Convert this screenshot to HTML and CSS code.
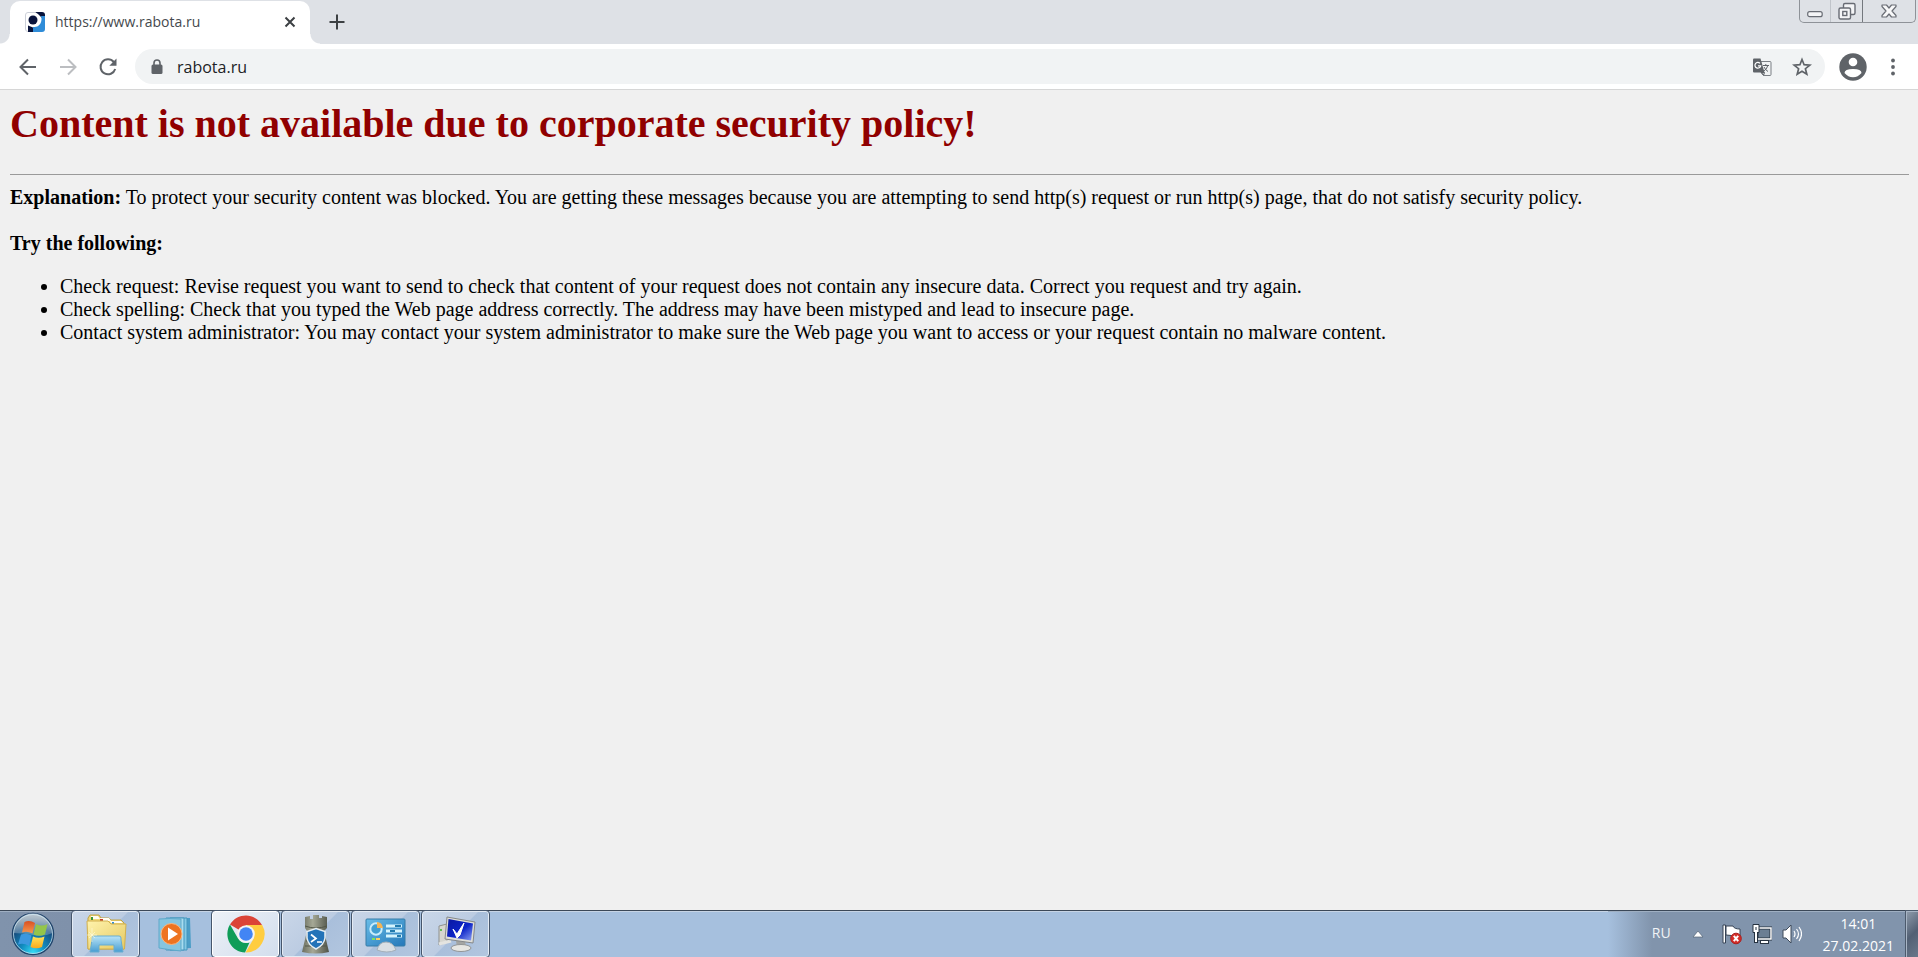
FILE: index.html
```html
<!DOCTYPE html>
<html lang="en">
<head>
<meta charset="utf-8">
<title>https://www.rabota.ru</title>
<link rel="stylesheet" href="styles.css">
</head>
<body>
<div class="desktop">
  <header class="browser">
    <div class="tabstrip">
      <div class="tab">
        <svg class="favicon" width="20" height="20" viewBox="0 0 20 20" aria-hidden="true">
          <defs><clipPath id="fav"><rect width="20" height="20" rx="3"/></clipPath></defs>
          <g clip-path="url(#fav)">
            <rect width="20" height="20" fill="#fff"/>
            <path d="M10 0h10v5l-3 1-4-4z" fill="#08133c"/>
            <path d="M20 4v16H8v-5c6 1 10-5 8-11z" fill="#2f8cd8"/>
            <path d="M3 13.500l5 2V20H3z" fill="#08133c"/>
            <circle cx="8" cy="8" r="4.500" fill="#08133c"/>
          </g>
          <path d="M10 .500H3Q.500.500.500 3v14Q.500 19.500 3 19.500" fill="none" stroke="#ccd0d8"/>
        </svg>
        <span class="tab-title">https://www.rabota.ru</span>
        <button class="tab-close" type="button" aria-label="Close tab">
          <svg width="12" height="12" viewBox="0 0 12 12"><path d="M1.500 1.500l9 9m0-9l-9 9" stroke="#3c4043" stroke-width="2"/></svg>
        </button>
      </div>
      <button class="new-tab" type="button" aria-label="New tab">
        <svg width="16" height="16" viewBox="0 0 16 16"><path d="M8 .500v15M.500 8h15" stroke="#3c4043" stroke-width="2"/></svg>
      </button>
      <div class="window-controls">
        <button class="win-btn" type="button" aria-label="Minimize">
          <svg width="16" height="20" viewBox="0 0 16 20"><rect x=".700" y="11.700" width="14.500" height="5" rx="2" fill="#f4f5f7" stroke="#686c74" stroke-width="1.200"/></svg>
        </button>
        <button class="win-btn" type="button" aria-label="Restore">
          <svg width="18" height="20" viewBox="0 0 18 20" fill="#f4f5f7" stroke="#686c74" stroke-width="1.400"><rect x="5.500" y="3.500" width="11.500" height="11" rx="1.500"/><rect x="1" y="8" width="11.500" height="11" rx="1.500"/><rect x="4.800" y="11.500" width="4" height="4"/></svg>
        </button>
        <button class="win-btn win-close" type="button" aria-label="Close">
          <svg width="16" height="20" viewBox="0 0 16 20"><path d="M1 5h4.500L8 8l2.500-3H15v1.500L11 11l4 4.500V17h-4.500L8 14l-2.500 3H1v-1.500L5 11 1 6.500z" fill="#f8f8f9" stroke="#686c74" stroke-width="1.200" stroke-linejoin="round"/></svg>
        </button>
      </div>
    </div>
    <div class="toolbar">
      <button class="nav-btn" type="button" aria-label="Back">
        <svg width="20" height="20" viewBox="0 0 20 20" fill="none" stroke="#5f6368" stroke-width="2"><path d="M18 10H3M10 2.500L2.500 10l7.500 7.500"/></svg>
      </button>
      <button class="nav-btn" type="button" aria-label="Forward" disabled>
        <svg width="20" height="20" viewBox="0 0 20 20" fill="none" stroke="#bcbec1" stroke-width="2"><path d="M2 10h15M10 2.500l7.500 7.500-7.500 7.500"/></svg>
      </button>
      <button class="nav-btn" type="button" aria-label="Reload">
        <svg width="20" height="20" viewBox="0 0 20 20"><path d="M15.800 5A7.500 7.500 0 1 0 17.200 12" fill="none" stroke="#5f6368" stroke-width="2"/><path d="M18.500 1.500v7.200h-7.200z" fill="#5f6368"/></svg>
      </button>
      <form class="omnibox">
        <svg width="12" height="16" viewBox="0 0 12 16" aria-hidden="true"><rect x=".500" y="5.500" width="11" height="9.500" rx="1.500" fill="#5f6368"/><path d="M3 6V4a3 3 0 0 1 6 0v2" fill="none" stroke="#5f6368" stroke-width="1.600"/></svg>
        <input class="url" type="text" aria-label="Address" value="rabota.ru">
        <button class="icon-btn" type="button" aria-label="Translate this page">
          <svg width="20" height="20" viewBox="0 0 20 20"><path d="M9 4.500h9q1 0 1 1v12q0 1-1 1h-6L9 14" fill="#f1f3f4" stroke="#7b7f84"/><path d="M2 1.500h6.500l4 14H2q-1 0-1-1v-12q0-1 1-1z" fill="#5f6368"/><path d="M8 6.300a2.900 2.900 0 1 0 .7 2.500H6" fill="none" stroke="#fff" stroke-width="1.200"/><path d="M11 8.500h6M13.800 7v1.500M15.800 8.500q-1 4-4 5.500M12 10q1.500 3 4 4.500M9 15.500h3.500l-1 3z" fill="none" stroke="#5f6368"/></svg>
        </button>
        <button class="icon-btn" type="button" aria-label="Bookmark this page">
          <svg width="20" height="20" viewBox="0 0 20 20"><path d="M10 2.500l2.100 5.200 5.700.400-4.400 3.600 1.400 5.500L10 14.200l-4.800 3 1.400-5.500L2.200 8.100l5.700-.400z" fill="none" stroke="#5f6368" stroke-width="1.700"/></svg>
        </button>
      </form>
      <button class="profile" type="button" aria-label="Profile">
        <svg width="28" height="28" viewBox="0 0 28 28"><circle cx="14" cy="14" r="13.700" fill="#5f6368"/><circle cx="14" cy="9" r="4.300" fill="#fff"/><path d="M5.500 20q0-4 8.500-4t8.500 4q-3.500 4.200-8.500 4.200T5.500 20z" fill="#fff"/></svg>
      </button>
      <button class="menu" type="button" aria-label="Menu">
        <svg width="4" height="18" viewBox="0 0 4 18" fill="#5f6368"><circle cx="2" cy="2.500" r="1.900"/><circle cx="2" cy="9" r="1.900"/><circle cx="2" cy="15.500" r="1.900"/></svg>
      </button>
    </div>
  </header>

  <main class="page">
    <h1 class="headline">Content is not available due to corporate security policy!</h1>
    <hr class="rule">
    <p class="explanation"><b>Explanation:</b> To protect your security content was blocked. You are getting these messages because you are attempting to send http(s) request or run http(s) page, that do not satisfy security policy.</p>
    <p class="try"><b>Try the following:</b></p>
    <ul class="tips">
      <li>Check request: Revise request you want to send to check that content of your request does not contain any insecure data. Correct you request and try again.</li>
      <li>Check spelling: Check that you typed the Web page address correctly. The address may have been mistyped and lead to insecure page.</li>
      <li>Contact system administrator: You may contact your system administrator to make sure the Web page you want to access or your request contain no malware content.</li>
    </ul>
  </main>

  <footer class="taskbar">
    <button class="start" type="button" aria-label="Start">
      <svg width="44" height="44" viewBox="0 0 44 44">
        <defs>
          <radialGradient id="orb" cx=".5" cy=".95" r=".85"><stop offset="0" stop-color="#35dcf5"/><stop offset=".35" stop-color="#118cc0"/><stop offset=".75" stop-color="#174f80"/><stop offset="1" stop-color="#41637f"/></radialGradient>
          <linearGradient id="gloss" x2="0" y2="1"><stop offset="0" stop-color="#fff" stop-opacity=".65"/><stop offset="1" stop-color="#fff" stop-opacity=".2"/></linearGradient>
          <linearGradient id="flagR" x2="0" y2="1"><stop offset="0" stop-color="#d94f20"/><stop offset="1" stop-color="#f79a50"/></linearGradient>
          <linearGradient id="flagY" x2="0" y2="1"><stop offset="0" stop-color="#ffe35a"/><stop offset="1" stop-color="#f7aa1d"/></linearGradient>
        </defs>
        <circle cx="22" cy="22" r="20.500" fill="url(#orb)" stroke="#21456c" stroke-width="1.500"/>
        <path d="M2.500 21a19.500 19.500 0 0 1 39 0q-8 4-19.500 2T2.500 21z" fill="url(#gloss)"/>
        <circle cx="22" cy="22" r="19.500" fill="none" stroke="#d5effa" stroke-opacity=".7"/>
        <path d="M13.500 10q5-2.500 10.500 1l-2.500 10.500q-5.500-3-10.500-1z" fill="url(#flagR)"/>
        <path d="M25 12q5.500 3 11.500 0L34 22.500q-6 2.500-11.500 0z" fill="#94c54a"/>
        <path d="M10 22.500q5.500-2 10.500 1L18 34q-5.500-3.500-11-1.500z" fill="#3c98df"/>
        <path d="M22 24.500q5.500 2.500 11.500 0L31 35q-6 2.500-11.500 0z" fill="url(#flagY)"/>
      </svg>
    </button>
    <nav class="tasks" aria-label="Taskbar">
      <button class="task" type="button" aria-label="Explorer">
        <svg width="44" height="42" viewBox="0 0 44 42">
          <defs>
            <linearGradient id="fold" x2="1" y2="1"><stop offset="0" stop-color="#fff3ac"/><stop offset="1" stop-color="#e5c963"/></linearGradient>
            <linearGradient id="stand" x2="0" y2="1"><stop offset="0" stop-color="#b9e4f7"/><stop offset="1" stop-color="#479dd2"/></linearGradient>
          </defs>
          <path d="M4 36V5l2-3h9l2 3h8l2 2h10l3 3v26z" fill="#f1d979" stroke="#c0a244"/>
          <path d="M7 3h7l2 3H7zM16 5h9l2 3H17zM26 8h11l2 2H27z" fill="#fffdf2"/>
          <path d="M7 4h2v3H7z" fill="#3c963a"/><path d="M16 6h3v2h-3z" fill="#c33d28"/><path d="M28 9h2v2h-2z" fill="#318bd0"/>
          <path d="M3 8h21l3 3h15l-1.500 25H4z" fill="url(#fold)" stroke="#d2b04e"/>
          <path d="M8 27v-2q0-2 2-2h25q2 0 2 2v2l2 12h-9v-7H15v7H6z" fill="url(#stand)" stroke="#68add0"/>
          <path d="M8 15v14M3 22h10M5 19l6 6M11 19l-6 6" stroke="#fffce0" stroke-opacity=".6"/>
        </svg>
      </button>
      <button class="task task-pinned" type="button" aria-label="Media Player">
        <svg width="36" height="38" viewBox="0 0 36 38">
          <path d="M14 3h18l1 30-15 1z" fill="#4b9dc6"/><path d="M12 3h17v32H12z" fill="#85c9e4" stroke="#4496bd"/><path d="M8 3h18v32H8z" fill="#a8dcef" stroke="#4496bd"/>
          <path d="M1 4q11-1 22 0v32q-11-1-22-3z" fill="#86c5df" stroke="#5ea9ca"/>
          <circle cx="13.500" cy="19" r="10.500" fill="#ee7421" stroke="#fbb77e"/>
          <path d="M10 12.500l10 6.500-10 6.500z" fill="#fff"/>
        </svg>
      </button>
      <button class="task task-active" type="button" aria-label="Chrome">
        <svg width="38" height="38" viewBox="0 0 38 38">
          <path d="M19 19L3 9.500A18.500 18.500 0 0 1 35 10H19z" fill="#db4437"/>
          <path d="M19 10h16.200A18.500 18.500 0 0 1 18.500 37.500L27 23z" fill="#ffcd40"/>
          <path d="M3 9.500L11 23.500q4 6 11.500 4L18 37.500A18.500 18.500 0 0 1 3 9.500z" fill="#0f9d58"/>
          <circle cx="19" cy="19" r="8.800" fill="#f4f4f4"/><circle cx="19" cy="19" r="6.800" fill="#4285f4"/>
        </svg>
      </button>
      <button class="task" type="button" aria-label="PowerShell">
        <svg width="28" height="40" viewBox="0 0 28 40">
          <defs><linearGradient id="rook"><stop offset="0" stop-color="#6b6f60"/><stop offset=".4" stop-color="#a5a896"/><stop offset="1" stop-color="#4f5347"/></linearGradient></defs>
          <path d="M3 3l5-1v3h3V1h6v3h3V2l5 1v11l-3 3 5 21q-13 3-27 0l5-21-2-3z" fill="url(#rook)"/>
          <path d="M3 12q11 4 22 0M4 27h5M3 32h8M19 32h6M6 21h4" stroke="#535748" fill="none"/>
          <path d="M14 14.500l9 3V24q-1 7-9 11-8-4-9-11v-6.500z" fill="#2373b8" stroke="#e6eef4" stroke-width="1.500"/>
          <path d="M9 20.500l5 4L9 28M15 28h5" fill="none" stroke="#fff" stroke-width="1.700"/>
        </svg>
      </button>
      <button class="task" type="button" aria-label="Control Panel">
        <svg width="42" height="38" viewBox="0 0 42 38">
          <defs><linearGradient id="pan" x2="1" y2="1"><stop offset="0" stop-color="#69bde8"/><stop offset="1" stop-color="#2578b9"/></linearGradient></defs>
          <rect x="1" y="4" width="39" height="27" rx="1" fill="url(#pan)" stroke="#367ca8"/>
          <circle cx="11" cy="14" r="5.700" fill="#419fd2" stroke="#c8ecfb" stroke-width="2"/><path d="M12 13V7q5 0 6 6z" fill="#f4b455"/>
          <path d="M21 11h16M21 16h16M21 21h16" stroke="#d5f4fd" stroke-width="3"/><path d="M30 11h6M25 16h5M32 21h4" stroke="#237bad" stroke-width="2"/>
          <path d="M7 24h3" stroke="#7ce45e" stroke-width="2"/><path d="M11 24h4" stroke="#ffd05e" stroke-width="2"/>
          <path d="M12 35q2-8 9-8t10 8q-9 4-19 0z" fill="#d9dfe4" stroke="#a4afb8"/>
        </svg>
      </button>
      <button class="task" type="button" aria-label="System">
        <svg width="40" height="38" viewBox="0 0 40 38">
          <defs><linearGradient id="scr" x2="1" y2="1"><stop offset="0" stop-color="#0a18a0"/><stop offset=".55" stop-color="#0c24c8"/><stop offset="1" stop-color="#8ea2f3"/></linearGradient></defs>
          <path d="M3 11l8-2v18l-8 3z" fill="#d6d6d0" stroke="#8e908d"/><circle cx="5" cy="15" r="1" fill="#38b32c"/><path d="M3 29l12-3" stroke="#e4e4e0" stroke-width="3"/>
          <path d="M20 26h9l1 6h-9z" fill="#a3a5a3"/><ellipse cx="25" cy="33" rx="10" ry="3.500" fill="#e6e6e2" stroke="#929596"/>
          <path d="M11 2l28 5-2 21-28-4z" fill="#deded8" stroke="#85888a"/><path d="M12.500 4L37 8.500l-2 17-24-4z" fill="url(#scr)"/>
          <path d="M17 14l4 5 7-11-4 12-3 3z" fill="#fff" stroke="#fff"/>
        </svg>
      </button>
    </nav>
    <div class="tray">
      <button class="lang" type="button">RU</button>
      <button class="tray-btn tray-up" type="button" aria-label="Show hidden icons"><svg width="12" height="8" viewBox="0 0 12 8"><path d="M1 7l5-6 5 6z" fill="#fff" stroke="#526174" stroke-width=".700"/></svg></button>
      <button class="tray-btn" type="button" aria-label="Action Center"><svg width="20" height="22" viewBox="0 0 20 22"><path d="M1 2h2.500v18H1z" fill="#fff" stroke="#364354"/><path d="M4 3h7q1 3 7 3v8h-6q-1-2-8-2z" fill="#fff" stroke="#364354"/><circle cx="14" cy="15.500" r="5.300" fill="#d52f29" stroke="#a91f1f"/><path d="M11.800 12.800l4.400 5.400m0-5.400l-4.400 5.400" stroke="#fff" stroke-width="2"/></svg></button>
      <button class="tray-btn" type="button" aria-label="Network"><svg width="20" height="22" viewBox="0 0 20 22"><path d="M5 5h14v11H5z" fill="#6b7e93" stroke="#263240" stroke-width="3"/><path d="M5 5h14v11H5z" fill="none" stroke="#fff" stroke-width="1.500"/><path d="M8 19h9" stroke="#263240" stroke-width="4"/><path d="M9 19h7" stroke="#fff" stroke-width="2"/><path d="M4 9v11" stroke="#263240" stroke-width="4"/><path d="M1 1.500h6v8H1z" fill="#fff" stroke="#263240"/><path d="M4 9v10" stroke="#fff" stroke-width="2"/><path d="M4 4v3" stroke="#263240"/></svg></button>
      <button class="tray-btn" type="button" aria-label="Volume"><svg width="20" height="22" viewBox="0 0 20 22"><path d="M1 7h3l5-5v18l-5-5H1z" fill="#fff" stroke="#3f4b5b"/><path d="M12 8q2 3 0 6M14.500 6q4 5 0 10M17 4q5 7 0 14" fill="none" stroke="#fff" stroke-width="1.200"/></svg></button>
      <button class="clock" type="button"><time>14:01</time><time datetime="2021-02-27">27.02.2021</time></button>
      <button class="show-desktop" type="button" aria-label="Show desktop"></button>
    </div>
  </footer>
</div>
</body>
</html>
```

FILE: styles.css
```css
* { box-sizing: border-box; }

body {
  margin: 0;
  font-family: "Open Sans", "Noto Sans", sans-serif;
}

button {
  padding: 0;
  border: 0;
  background: none;
  color: inherit;
  font: inherit;
}

svg { display: block; flex: none; }

.desktop {
  display: flex;
  flex-direction: column;
  height: 100vh;
  overflow: hidden;
  background: #f0f0f0;
}

/* Browser window */
.browser { flex: none; }

.tabstrip {
  display: flex;
  align-items: flex-start;
  height: 44px;
  padding: 0 2px 0 10px;
  background: #dee1e6;
}

.tab {
  position: relative;
  display: flex;
  align-items: center;
  width: 300px;
  height: 43px;
  margin-top: 1px;
  padding: 0 14px 2px 15px;
  border-radius: 10px 10px 0 0;
  background: #fff;
}

.tab::before,
.tab::after {
  content: "";
  position: absolute;
  bottom: 0;
  width: 10px;
  height: 10px;
}

.tab::before {
  right: 100%;
  background: radial-gradient(circle at 0 0, #dee1e6 9px, #fff 10px);
}

.tab::after {
  left: 100%;
  background: radial-gradient(circle at 100% 0, #dee1e6 9px, #fff 10px);
}

.tab-title {
  flex: 1;
  margin-left: 10px;
  color: #45494d;
  font-size: 14px;
}

.new-tab { margin: 14px 0 0 19px; }

.window-controls {
  display: flex;
  height: 23px;
  margin-left: auto;
  border: 1px solid #8e9298;
  border-top: 0;
  border-radius: 0 0 5px 5px;
}

.win-btn {
  display: flex;
  justify-content: center;
  width: 31px;
  border-right: 1px solid #c0c4ca;
}

.win-btn:nth-child(2) { border-right-color: #74787e; width: 32px; }
.win-close { width: 52px; border-right: 0; }

.toolbar {
  display: flex;
  align-items: center;
  height: 46px;
  padding: 0 23px 0 18px;
  border-bottom: 1px solid #d6d6d6;
  background: #fff;
}

.nav-btn { margin-right: 20px; }
.nav-btn:nth-child(3) { margin-right: 17px; }

.omnibox {
  display: flex;
  flex: 1;
  align-items: center;
  height: 35px;
  margin-right: 14px;
  padding: 0 13px 0 16px;
  border-radius: 18px;
  background: #f1f3f4;
}

.url {
  flex: 1;
  min-width: 0;
  margin-left: 14px;
  padding: 0;
  border: 0;
  outline: 0;
  background: transparent;
  color: #202124;
  font: 16px "Open Sans", "Noto Sans", sans-serif;
}

.icon-btn + .icon-btn { margin-left: 20px; }
.menu { margin-left: 24px; }

/* Blocked page */
.page {
  flex: 1;
  min-height: 0;
  padding: 11px 9px 0 10px;
  color: #000;
  font: 20px/23px "Liberation Serif", "Times New Roman", serif;
}

.headline {
  margin: 0 0 27px;
  color: #900000;
  font-size: 40px;
  line-height: 46px;
}

.rule {
  margin: 0 0 11px;
  border: solid #9a9a9a;
  border-width: 1px 0 0;
}

.explanation { margin: 0 0 23px; }
.try { margin: 0 0 20px; }
.tips { margin: 0; padding-left: 50px; }

/* Taskbar */
.taskbar {
  display: flex;
  flex: none;
  height: 47px;
  border-top: 1px solid #3b4858;
  background: #a6c0de;
  box-shadow: inset 0 1px #c6d4e5;
}

.start {
  display: flex;
  align-items: center;
  justify-content: center;
  width: 72px;
  padding-right: 6px;
  background: linear-gradient(90deg, #8093ac, #7f91aa);
  box-shadow: inset 0 1px #9fafc2;
}

.tasks { display: flex; gap: 3px; }

.task {
  display: flex;
  align-items: center;
  justify-content: center;
  width: 67px;
  border: 1px solid #e4ebf4;
  border-radius: 3px;
  outline: 1px solid #46566c;
  background: linear-gradient(135deg, #c9d6e8, #bccce2 50%, #a9bfdb 51%, #b2c6df);
}

.task-pinned { border-color: transparent; outline: 0; background: none; }
.task-active { border-color: #fff; background: linear-gradient(135deg, #edf1f7, #dfe7f2 50%, #d3deed); }

.tray {
  display: flex;
  align-items: center;
  margin-left: auto;
  padding-left: 44px;
  background: linear-gradient(90deg, #a6c0de, #8194ac 44px);
  box-shadow: inset 0 1px #9fafc2;
  color: #fff;
  font-size: 14px;
}

.lang { margin: 0 21px 4px 0; color: #f0f3f6; }
.tray-btn { margin-right: 10px; }
.tray-up { margin-right: 18px; }

.clock {
  display: flex;
  flex-direction: column;
  align-items: center;
  margin: 2px 12px 0 11px;
  line-height: 22px;
}

.show-desktop {
  align-self: stretch;
  width: 12px;
  border: 1px solid #a8b5c5;
  border-width: 1px 0 0 1px;
  outline: 1px solid #4c5a6c;
  background: linear-gradient(135deg, #8c99a9, #526074 50%, #69788b);
}
```
